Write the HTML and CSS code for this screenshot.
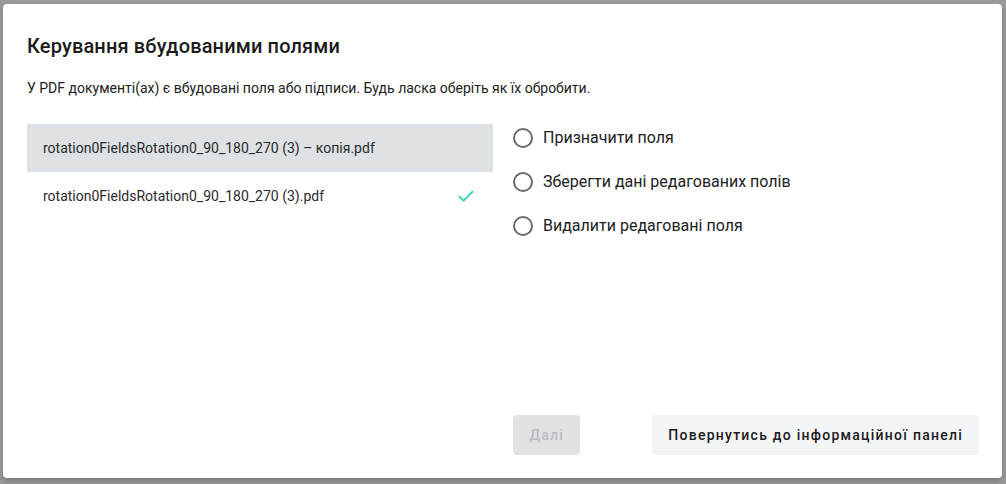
FILE: index.html
```html
<!DOCTYPE html>
<html lang="uk">
<head>
<meta charset="utf-8">
<link rel="stylesheet" href="styles.css">
</head>
<body>
<div class="dialog">
  <h1 class="title">Керування вбудованими полями</h1>
  <p class="subtitle">У PDF документі(ах) є вбудовані поля або підписи. Будь ласка оберіть як їх обробити.</p>
  <div class="content">
    <ul class="files">
      <li class="file active"><span>rotation0FieldsRotation0_90_180_270 (3) – копія.pdf</span></li>
      <li class="file"><span>rotation0FieldsRotation0_90_180_270 (3).pdf</span>
        <svg class="check" width="16" height="12" viewBox="0 0 16 12"><path d="M1 6.2 L5.6 10.6 L15 1.2" fill="none" stroke="#3dd6b8" stroke-width="2"/></svg>
      </li>
    </ul>
    <div class="options">
      <label class="option"><span class="radio"></span>Призначити поля</label>
      <label class="option"><span class="radio"></span>Зберегти дані редагованих полів</label>
      <label class="option"><span class="radio"></span>Видалити редаговані поля</label>
    </div>
  </div>
  <div class="actions">
    <button class="btn btn-disabled">Далі</button>
    <button class="btn btn-secondary">Повернутись до інформаційної панелі</button>
  </div>
</div>
</body>
</html>
```
FILE: styles.css
```css
html, body {
  margin: 0;
  padding: 0;
}
body {
  background: #999999;
  font-family: Roboto, "Noto Sans", sans-serif;
  height: 484px;
  overflow: hidden;
}
.dialog {
  box-sizing: border-box;
  margin: 4px 4px 0 3px;
  width: 999px;
  height: 474px;
  background: #fff;
  border-radius: 4px;
  box-shadow: 0 3px 5px rgba(0,0,0,0.2);
  padding: 30px 23px 23px 24px;
  display: flex;
  flex-direction: column;
}
.title {
  margin: 0;
  font-size: 20px;
  font-weight: 500;
  letter-spacing: 0.15px;
  color: #1b1b1b;
  line-height: 24px;
}
.subtitle {
  margin: 20px 0 0;
  font-size: 14px;
  color: #222;
  line-height: 20px;
}
.content {
  display: flex;
  margin-top: 26px;
  flex: 1;
}
.files {
  list-style: none;
  margin: 0;
  padding: 0;
  width: 466px;
}
.file {
  height: 48px;
  display: flex;
  align-items: center;
  justify-content: space-between;
  padding: 0 19px 0 16px;
  font-size: 14px;
  color: #2a2a2a;
}
.file.active {
  background: #dfe2e5;
}
.check {
  margin-top: 0;
}
.options {
  display: flex;
  flex-direction: column;
  gap: 24px;
  padding-left: 20px;
  padding-top: 4px;
}
.option {
  display: flex;
  align-items: center;
  gap: 10px;
  font-size: 16px;
  color: #222;
  line-height: 20px;
}
.radio {
  box-sizing: border-box;
  width: 20px;
  height: 20px;
  border: 2px solid #6b6b6b;
  border-radius: 50%;
}
.actions {
  display: flex;
  justify-content: flex-end;
  gap: 72px;
}
.btn {
  height: 40px;
  border: none;
  border-radius: 4px;
  font-family: Roboto, "Noto Sans", sans-serif;
  font-size: 14px;
  font-weight: 500;
  letter-spacing: 1.25px;
  padding: 0 16px;
}
.btn-disabled {
  width: 67px;
  background: #e2e2e2;
  color: #b9bcc0;
}
.btn-secondary {
  background: #f3f4f6;
  color: #1b1b1b;
}
```
